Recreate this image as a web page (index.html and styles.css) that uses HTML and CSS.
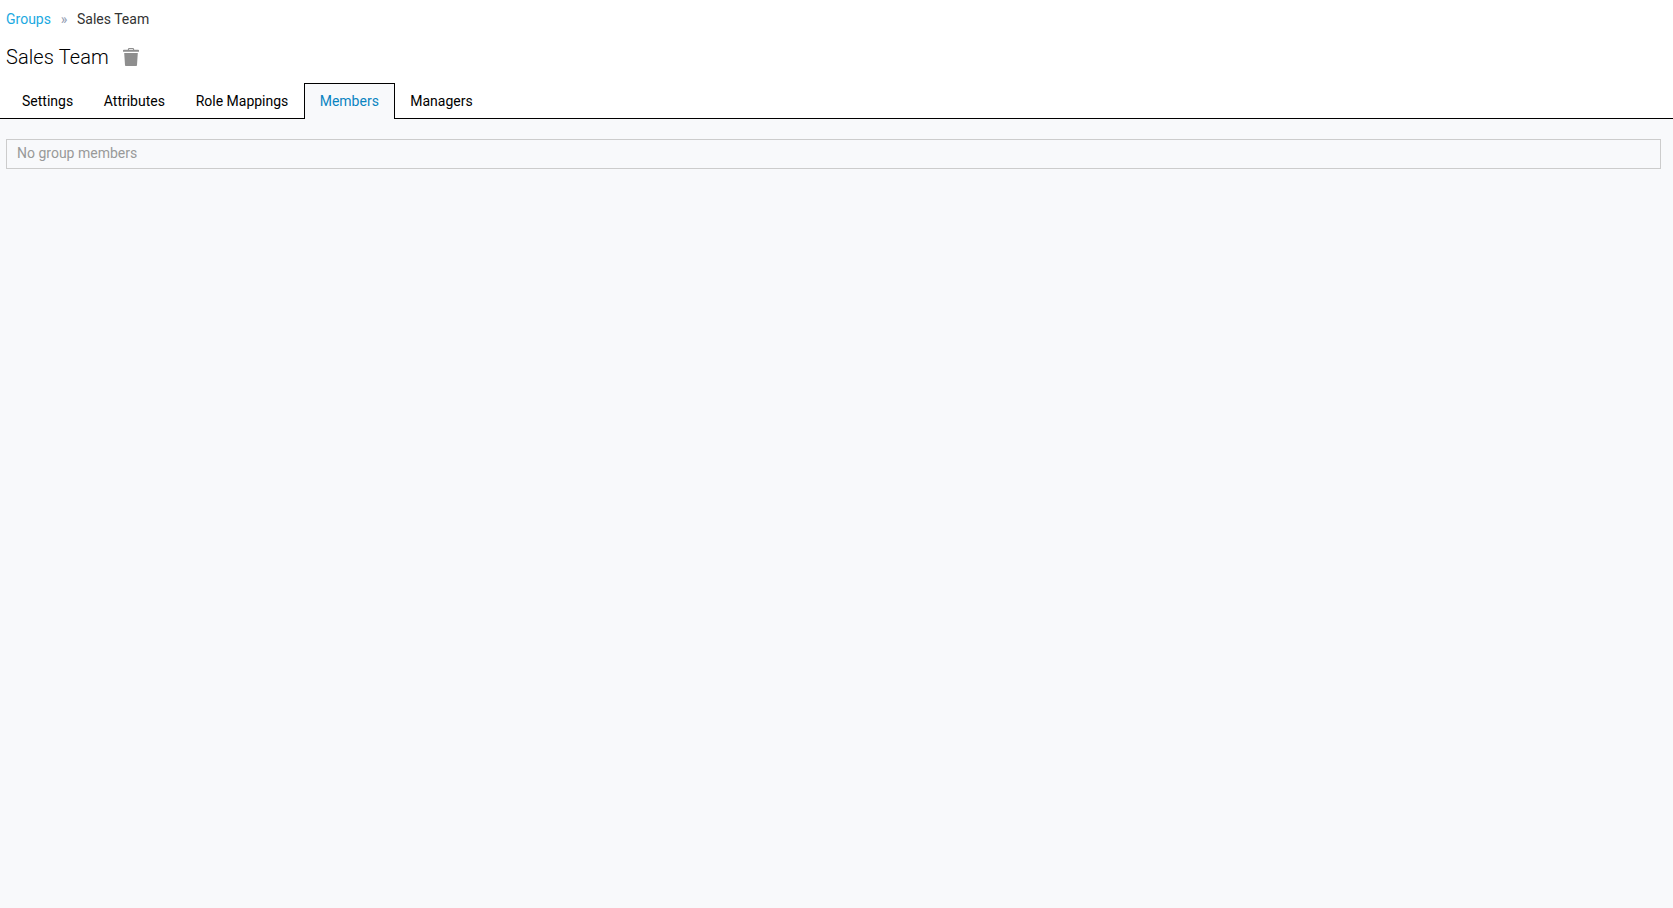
FILE: index.html
```html
<!DOCTYPE html>
<html lang="en">
<head>
    <meta charset="UTF-8">
    <title>Sales Team</title>
    <link rel="stylesheet" href="styles.css">
</head>
<body>
    <header class="page-header">
        <ol class="breadcrumb">
            <li><a href="#">Groups</a></li>
            <li class="sep">&raquo;</li>
            <li>Sales Team</li>
        </ol>
        <h1 class="title">
            Sales Team
            <svg class="trash" viewBox="0 0 16 18" aria-hidden="true">
                <path d="M5.500 0h5l.8 1.800H15.200c.4 0 .8.4.8.8v1.200H0V2.600c0-.4.4-.8.8-.8h3.900zM6.200 1l-.3.800h4.200L9.800 1zM1.200 5h13.600l-.8 12c0 .6-.5 1-1 1H3c-.5 0-1-.4-1-1z"/>
            </svg>
        </h1>
        <nav class="tabs">
            <a href="#">Settings</a>
            <a href="#">Attributes</a>
            <a href="#">Role Mappings</a>
            <a href="#" class="active">Members</a>
            <a href="#">Managers</a>
        </nav>
    </header>
    <main class="content">
        <div class="empty">No group members</div>
    </main>
</body>
</html>
```

FILE: styles.css
```css
* {
    margin: 0;
    padding: 0;
    box-sizing: border-box;
}

html, body {
    height: 100%;
}

body {
    font-family: Roboto, 'Liberation Sans', sans-serif;
    font-size: 14px;
    color: #000;
    background: #f8f9fb;
    display: flex;
    flex-direction: column;
}

a {
    text-decoration: none;
}

.page-header {
    background: white;
    padding-left: 6px;
    border-bottom: 1px solid #000;
}

.breadcrumb {
    list-style: none;
    display: flex;
    gap: 9.75px;
    height: 38px;
    align-items: center;
    color: #333;
}

.breadcrumb a {
    color: #1ba9e1;
}

.breadcrumb .sep {
    color: #8f9bb0;
}

.title {
    font-size: 20px;
    font-weight: 300;
    color: #000;
    letter-spacing: 0.1px;
    display: flex;
    align-items: center;
    height: 38px;
    gap: 14px;
    margin-bottom: 7px;
}

.trash {
    width: 16px;
    height: 18px;
    fill: #8e8e8e;
}

.tabs {
    display: flex;
    height: 36px;
    margin-bottom: -1px;
    padding-left: 0.65px;
}

.tabs a {
    color: #000;
    padding: 0 15.35px;
    line-height: 36px;
    white-space: nowrap;
}

.tabs a.active {
    color: #0a84c1;
    background: #f8f9fb;
    padding: 0 15px;
    border: 1px solid #000;
    border-bottom: 0;
    line-height: 34px;
}

.content {
    flex: 1;
    padding: 20px 12px 0 6px;
}

.empty {
    height: 30px;
    line-height: 27px;
    padding-left: 10px;
    color: #999;
    border: 1px solid #ccc;
}
```
